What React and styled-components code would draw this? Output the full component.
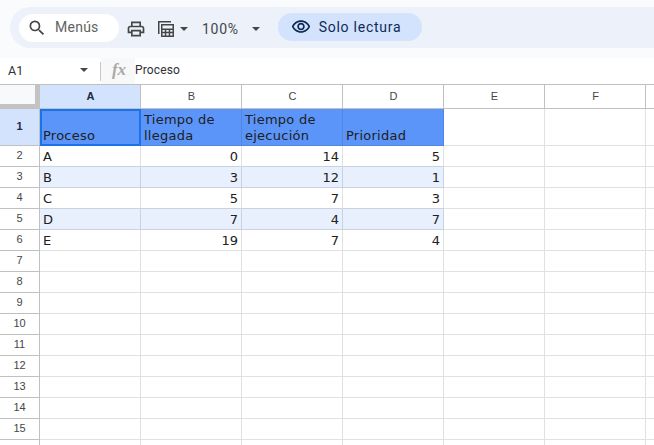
import React from "react";
import styled, { createGlobalStyle } from "styled-components";

const GlobalStyle = createGlobalStyle`
  * { box-sizing: border-box; }
  body { margin: 0; overflow: hidden; background: #f9fbfd; }
`;

const Page = styled.main`
  width: 654px;
  height: 445px;
  overflow: hidden;
  display: flex;
  flex-direction: column;
  background: #f9fbfd;
  font-family: Roboto, "Liberation Sans", sans-serif;
`;

const Toolbar = styled.header`
  display: flex;
  align-items: center;
  flex: none;
  height: 41px;
  margin: 7px 0 10px 10px;
  padding-left: 9px;
  border-radius: 21px 0 0 21px;
  background: #ecf1fa;
  color: #444746;
`;

const MenuSearch = styled.button`
  display: flex;
  align-items: center;
  gap: 8px;
  width: 100px;
  height: 28px;
  margin: 0 7px 0 0;
  padding: 0 0 0 8px;
  border: 0;
  border-radius: 14px;
  background: #fff;
  color: #444746;
  font: 400 14px Roboto, sans-serif;
  letter-spacing: 0.25px;
`;

const MenuLabel = styled.span`
  padding-bottom: 2px;
  color: #5f6361;
`;

const ToolButton = styled.button`
  display: flex;
  align-items: center;
  gap: ${(p) => p.$gap || 0}px;
  height: 28px;
  margin: 3px ${(p) => p.$after || 0}px 0 0;
  padding: 0;
  border: 0;
  background: transparent;
  color: #444746;
  font: 400 14px Roboto, sans-serif;
  letter-spacing: 0.7px;
`;

const ReadOnly = styled.button`
  display: flex;
  align-items: center;
  gap: 8px;
  width: 144px;
  height: 28px;
  margin: 0 0 1px;
  padding: 0 0 0 13px;
  border: 0;
  border-radius: 14px;
  background: #d3e3fd;
  color: #0f2a54;
  font: 400 14px Roboto, sans-serif;
  letter-spacing: 0.75px;
`;

const Icon = styled.svg`
  display: block;
  flex: none;
  width: 20px;
  height: 20px;
  fill: currentColor;
`;

const Caret = styled.svg`
  display: block;
  flex: none;
  width: 8px;
  height: 4px;
  fill: #444746;
`;

const FormulaBar = styled.section`
  display: flex;
  align-items: center;
  flex: none;
  height: 26px;
  background: #fff;
  font-size: 12.5px;
  color: #303134;
`;

const NameBox = styled.div`
  display: flex;
  align-items: center;
  justify-content: space-between;
  width: 101px;
  height: 19px;
  padding: 0 12px 2px 8px;
  border-right: 1px solid #c7c7c7;
`;

const FxBox = styled.div`
  display: flex;
  align-items: center;
  justify-content: center;
  width: 34px;
  height: 26px;
  padding: 0 0 2px 2px;
  background: #f8f8f8;
  color: #a9a9a9;
  font: italic 700 17px/20px "Liberation Serif", serif;
`;

const FormulaText = styled.span`
  padding-bottom: 2px;
  font-size: 12px;
  letter-spacing: 0.15px;
`;

const Sheet = styled.section`
  display: grid;
  flex: none;
  grid-template-columns: 40px repeat(6, 101px) 10px;
  grid-template-rows: 24px 37px repeat(14, 21px) 8px;
  width: 656px;
  border-top: 1px solid #c0c0c0;
  background: #fff;
`;

const Corner = styled.div`
  border-right: 5px solid #c3c3c3;
  border-bottom: 5px solid #c3c3c3;
  background: #f8f9fa;
`;

const Heading = styled.div`
  display: flex;
  align-items: center;
  justify-content: center;
  overflow: hidden;
  padding: 0 ${(p) => (p.$row ? 7 : 0)}px ${(p) => (p.$row ? 2 : 1)}px ${(p) => (p.$row ? 0 : 1)}px;
  padding-right: 0;
  border-right: 1px solid #c0c0c0;
  border-bottom: 1px solid #c0c0c0;
  background: ${(p) => (p.$active ? "#d3e3fd" : "#fff")};
  color: ${(p) => (p.$active ? "#1c2b45" : "#444746")};
  font: ${(p) => (p.$active ? 700 : 400)} 11px/14px "Liberation Sans", Arial, sans-serif;
`;

const fills = { header: "#5b95f9", band: "#e8f0fe", plain: "#fff" };
const lines = { header: "#5086e0", band: "#c9d2e3", plain: "#e1e1e1" };

const Cell = styled.div`
  display: flex;
  align-items: flex-end;
  justify-content: ${(p) => (p.$number ? "flex-end" : "flex-start")};
  overflow: hidden;
  padding: 0 3px 1px 3px;
  border-right: 1px solid ${(p) => lines[p.$fill]};
  border-bottom: 1px solid ${(p) => (p.$bandEdge ? lines.band : lines[p.$fill])};
  background: ${(p) => fills[p.$fill]};
  color: #202020;
  font: 13px/16px "DejaVu Sans", Verdana, sans-serif;
  letter-spacing: ${(p) => (p.$fill === "header" ? 0.25 : 0)}px;
  white-space: pre-line;
  ${(p) => p.$selected && `border: 2px solid #1a73e8; padding: 0 1px 0 1px;`}
`;

const columns = ["A", "B", "C", "D", "E", "F", ""];
const rows = Array.from({ length: 16 }, (_, i) => (i < 15 ? i + 1 : ""));
const data = [
  ["Proceso", "Tiempo de\nllegada", "Tiempo de\nejecución", "Prioridad"],
  ["A", 0, 14, 5],
  ["B", 3, 12, 1],
  ["C", 5, 7, 3],
  ["D", 7, 4, 7],
  ["E", 19, 7, 4],
];

const fillOf = (row, col) => {
  if (col > 3) return "plain";
  if (row === 0) return "header";
  return row === 2 || row === 4 ? "band" : "plain";
};

const DropArrow = () => (
  <Caret viewBox="0 0 8 4"><path d="M0 0h8L4 4z" /></Caret>
);

export default function App() {
  return (
    <Page>
      <GlobalStyle />
      <Toolbar>
        <MenuSearch>
          <Icon viewBox="0 0 24 24"><path d="M15.5 14h-.79l-.28-.27A6.47 6.47 0 0 0 16 9.5 6.5 6.5 0 1 0 9.5 16c1.61 0 3.09-.59 4.23-1.57l.27.28v.79l5 4.99L20.49 19l-4.99-5zm-6 0C7.01 14 5 11.99 5 9.5S7.01 5 9.5 5 14 7.01 14 9.5 11.99 14 9.5 14z" /></Icon>
          <MenuLabel>Menús</MenuLabel>
        </MenuSearch>
        <ToolButton $after={10}>
          <Icon viewBox="0 0 24 24"><path d="M19 8h-1V3H6v5H5c-1.66 0-3 1.34-3 3v6h4v4h12v-4h4v-6c0-1.66-1.34-3-3-3zM8 5h8v3H8V5zm8 12v2H8v-4h8v2zm2-2v-2H6v2H4v-4c0-.55.45-1 1-1h14c.55 0 1 .45 1 1v4h-2z" /></Icon>
        </ToolButton>
        <ToolButton $gap={4} $after={14}>
          <Icon viewBox="0 0 20 20"><path d="M2 2h13v1.5H3.5V15H2zM5 5h13v13H5zM6.5 6.5v3h10v-3zM6.5 11v1.8h2.3V11zM10.3 11v1.8h2.4V11zM14.2 11v1.8h2.3V11zM6.5 14.3v2.2h2.3v-2.2zM10.3 14.3v2.2h2.4v-2.2zM14.2 14.3v2.2h2.3v-2.2z" fillRule="evenodd" /></Icon>
          <DropArrow />
        </ToolButton>
        <ToolButton $gap={13} $after={18}>
          100%
          <DropArrow />
        </ToolButton>
        <ReadOnly>
          <Icon viewBox="0 0 24 24"><path d="M12 6c3.79 0 7.17 2.13 8.82 5.5C19.17 14.87 15.79 17 12 17s-7.17-2.13-8.82-5.5C4.83 8.13 8.21 6 12 6m0-2C7 4 2.73 7.11 1 11.5 2.73 15.89 7 19 12 19s9.27-3.11 11-7.5C21.27 7.11 17 4 12 4zm0 5a2.5 2.5 0 0 1 0 5 2.5 2.5 0 0 1 0-5m0-2c-2.48 0-4.5 2.02-4.5 4.5S9.52 16 12 16s4.5-2.02 4.5-4.5S14.48 7 12 7z" fillRule="evenodd" /></Icon>
          Solo lectura
        </ReadOnly>
      </Toolbar>
      <FormulaBar>
        <NameBox>A1<DropArrow /></NameBox>
        <FxBox>fx</FxBox>
        <FormulaText>Proceso</FormulaText>
      </FormulaBar>
      <Sheet>
        <Corner />
        {columns.map((name, i) => (
          <Heading key={i} $active={i === 0}>{name}</Heading>
        ))}
        {rows.map((label, row) => (
          <React.Fragment key={row}>
            <Heading $row $active={row === 0}>{label}</Heading>
            {columns.map((_, col) => {
              const value = data[row]?.[col];
              return (
                <Cell
                  key={col}
                  $fill={fillOf(row, col)}
                  $bandEdge={col < 4 && (row === 1 || row === 3)}
                  $number={typeof value === "number"}
                  $selected={row === 0 && col === 0}
                >
                  {value}
                </Cell>
              );
            })}
          </React.Fragment>
        ))}
      </Sheet>
    </Page>
  );
}
